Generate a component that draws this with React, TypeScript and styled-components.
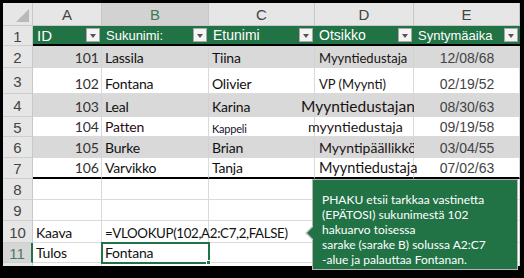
import React from "react";
import styled, { createGlobalStyle, css } from "styled-components";

const GREEN = "#217346";
const LATO = `Lato, "Liberation Sans", Arial, sans-serif`;
const SANS = `"Liberation Sans", Arial, sans-serif`;
const COLS = "30px 69px 107px 106px 99px 106px";

type Tone = "band" | "plain";
type Align = "left" | "right" | "center";

const GlobalStyle = createGlobalStyle`
  html, body { margin: 0; padding: 0; background: #000; }
  body { font-family: ${SANS}; }
`;

const Frame = styled.div`
  width: 524px;
  height: 278px;
  box-sizing: border-box;
  padding: 3px 4px 12px 3px;
  background: #000;
`;

const Sheet = styled.div`
  position: relative;
  width: 517px;
  height: 263px;
`;

const Grid = styled.div`
  width: 517px;
  height: 263px;
  overflow: hidden;
  background: #fff;
`;

const Row = styled.div<{ $h: number }>`
  display: grid;
  grid-template-columns: ${COLS};
  height: ${(p) => p.$h}px;
`;

const Corner = styled.div`
  display: flex;
  align-items: flex-end;
  justify-content: flex-end;
  box-sizing: border-box;
  padding: 0 3px 3px 0;
  background: #e6e6e6;
  border-right: 1px solid #c8c8c8;
  border-bottom: 1px solid #c8c8c8;
  &::after {
    content: "";
    border-left: 13px solid transparent;
    border-bottom: 13px solid #b9b9b9;
  }
`;

const ColHead = styled.div<{ $selected?: boolean }>`
  display: flex;
  align-items: center;
  justify-content: center;
  box-sizing: border-box;
  font-family: ${SANS};
  font-size: 15px;
  color: ${(p) => (p.$selected ? "#3f7a52" : "#444")};
  background: ${(p) => (p.$selected ? "#d2d2d2" : "#e6e6e6")};
  border-right: 1px solid #c8c8c8;
  border-bottom: 1px solid #c8c8c8;
`;

const RowHead = styled.div<{ $selected?: boolean }>`
  display: flex;
  align-items: center;
  justify-content: center;
  box-sizing: border-box;
  padding-top: 1px;
  font-family: ${SANS};
  font-size: 15px;
  color: ${(p) => (p.$selected ? "#4d7a5c" : "#444")};
  background: ${(p) => (p.$selected ? "#d6d6d6" : "#e6e6e6")};
  border-right: ${(p) => (p.$selected ? `2px solid ${GREEN}` : "1px solid #c8c8c8")};
  border-bottom: 1px solid #cfcfcf;
`;

const TableHead = styled.div<{ $size: number }>`
  display: flex;
  align-items: center;
  justify-content: space-between;
  box-sizing: border-box;
  padding: 0 2px 0 4px;
  font-family: ${SANS};
  font-size: ${(p) => p.$size}px;
  color: #fff;
  background: ${GREEN};
  border-bottom: 2px solid #000;
  white-space: nowrap;
`;

const FilterButton = styled.span`
  display: flex;
  align-items: center;
  justify-content: center;
  width: 14px;
  height: 14px;
  box-sizing: border-box;
  background: #f4f4f4;
  border: 1px solid #a8a8a8;
  &::after {
    content: "";
    border-left: 3px solid transparent;
    border-right: 3px solid transparent;
    border-top: 4px solid #555;
    margin-top: 1px;
  }
`;

const Cell = styled.div<{ $tone?: Tone; $align?: Align; $rule?: boolean; $active?: boolean }>`
  position: relative;
  display: flex;
  align-items: flex-end;
  justify-content: ${(p) =>
    p.$align === "right" ? "flex-end" : p.$align === "center" ? "center" : "flex-start"};
  box-sizing: border-box;
  padding: 0 2px 1px 3px;
  white-space: nowrap;
  font-family: ${LATO};
  font-size: 14px;
  color: #111;
  background: ${(p) => (p.$tone === "band" ? "#d9d9d9" : "transparent")};
  border-right: 1px solid ${(p) => (p.$tone === "band" ? "#d2d2d2" : "#dadada")};
  border-bottom: ${(p) =>
    p.$rule ? "2px solid #000" : `1px solid ${p.$tone === "band" ? "#d9d9d9" : "#dadada"}`};
  ${(p) =>
    p.$active &&
    css`
      z-index: 2;
      outline: 2px solid ${GREEN};
      outline-offset: -1px;
      &::after {
        content: "";
        position: absolute;
        right: -3px;
        bottom: -3px;
        width: 5px;
        height: 5px;
        background: ${GREEN};
        border: 1px solid #fff;
        box-sizing: border-box;
      }
    `}
`;

const Text = styled.span<{
  $size?: number;
  $color?: string;
  $sans?: boolean;
  $shift?: number;
  $track?: number;
}>`
  font-family: ${(p) => (p.$sans ? SANS : LATO)};
  font-size: ${(p) => p.$size ?? 14}px;
  letter-spacing: ${(p) => p.$track ?? -0.2}px;
  color: ${(p) => p.$color ?? "#111"};
  margin-left: ${(p) => p.$shift ?? 0}px;
`;

const Callout = styled.div`
  position: absolute;
  left: 309px;
  top: 176px;
  width: 206px;
  height: 91px;
  box-sizing: border-box;
  padding: 12px 6px 0 9px;
  background: ${GREEN};
  border: 1px solid #b5b5b5;
  font-family: ${LATO};
  font-size: 12px;
  line-height: 15px;
  color: #fff;
  z-index: 3;
  &::before {
    content: "";
    position: absolute;
    left: -8px;
    top: 45px;
    border-top: 8px solid transparent;
    border-bottom: 8px solid transparent;
    border-right: 8px solid #c8c8c8;
  }
  &::after {
    content: "";
    position: absolute;
    left: -6px;
    top: 46px;
    border-top: 7px solid transparent;
    border-bottom: 7px solid transparent;
    border-right: 7px solid ${GREEN};
  }
`;

const CalloutLine = styled.div``;

const columns = ["A", "B", "C", "D", "E"];

const heads = [
  { label: "ID", size: 15 },
  { label: "Sukunimi:", size: 13 },
  { label: "Etunimi", size: 14 },
  { label: "Otsikko", size: 14 },
  { label: "Syntymäaika", size: 13 },
];

type Person = {
  h: number;
  id: string;
  last: string;
  lastColor?: string;
  first: string;
  firstSize?: number;
  firstColor?: string;
  title: string;
  titleSize: number;
  titleShift: number;
  date: string;
};

const people: Person[] = [
  { h: 22, id: "101", last: "Lassila", first: "Tiina", title: "Myyntiedustaja", titleSize: 13, titleShift: 1, date: "12/08/68" },
  { h: 26, id: "102", last: "Fontana", first: "Olivier", title: "VP (Myynti)", titleSize: 13, titleShift: 1, date: "02/19/52" },
  { h: 23, id: "103", last: "Leal", first: "Karina", title: "Myyntiedustajan", titleSize: 15.5, titleShift: -17, date: "08/30/63" },
  { h: 20, id: "104", last: "Patten", lastColor: "#2a0a14", first: "Kappeli", firstSize: 11, firstColor: "#1a1030", title: "myyntiedustaja", titleSize: 14.2, titleShift: -10, date: "09/19/58" },
  { h: 21, id: "105", last: "Burke", first: "Brian", title: "Myyntipäällikkö", titleSize: 14, titleShift: 1, date: "03/04/55" },
  { h: 21, id: "106", last: "Varvikko", first: "Tanja", title: "Myyntiedustaja", titleSize: 14.5, titleShift: 1, date: "07/02/63" },
];

const calloutText = [
  "PHAKU etsii tarkkaa vastinetta",
  "(EPÄTOSI) sukunimestä 102",
  "hakuarvo toisessa",
  "sarake (sarake B) solussa A2:C7",
  "-alue ja palauttaa Fontanan.",
];

const EmptyRow = ({ n, h }: { n: number; h: number }) => (
  <Row $h={h}>
    <RowHead>{n}</RowHead>
    <Cell />
    <Cell />
    <Cell />
    <Cell />
    <Cell />
  </Row>
);

const App = () => {
  return (
    <Frame>
      <GlobalStyle />
      <Sheet>
        <Grid>
          <Row $h={23}>
            <Corner />
            {columns.map((c) => (
              <ColHead key={c} $selected={c === "B"}>
                {c}
              </ColHead>
            ))}
          </Row>
          <Row $h={20}>
            <RowHead>1</RowHead>
            {heads.map((h) => (
              <TableHead key={h.label} $size={h.size}>
                <span>{h.label}</span>
                <FilterButton />
              </TableHead>
            ))}
          </Row>
          {people.map((p, i) => {
            const tone: Tone = i % 2 === 0 ? "band" : "plain";
            const rule = i === people.length - 1;
            return (
              <Row key={p.id} $h={p.h}>
                <RowHead>{i + 2}</RowHead>
                <Cell $tone={tone} $align="right" $rule={rule}>
                  <Text $size={14} $track={0} $color="#333">{p.id}</Text>
                </Cell>
                <Cell $tone={tone} $rule={rule}>
                  <Text $color={p.lastColor}>{p.last}</Text>
                </Cell>
                <Cell $tone={tone} $rule={rule}>
                  <Text $size={p.firstSize} $color={p.firstColor}>{p.first}</Text>
                </Cell>
                <Cell $tone={tone} $rule={rule}>
                  <Text $size={p.titleSize} $track={0} $color="#1a1414" $shift={p.titleShift}>
                    {p.title}
                  </Text>
                </Cell>
                <Cell $tone={tone} $align="center" $rule={rule}>
                  <Text $sans $size={14} $track={0} $color="#444">{p.date}</Text>
                </Cell>
              </Row>
            );
          })}
          <EmptyRow n={8} h={21} />
          <EmptyRow n={9} h={21} />
          <Row $h={22}>
            <RowHead>10</RowHead>
            <Cell>
              <Text>Kaava</Text>
            </Cell>
            <Cell>
              <Text $size={13.3} $track={-0.35}>=VLOOKUP(102,A2:C7,2,FALSE)</Text>
            </Cell>
            <Cell />
            <Cell />
            <Cell />
          </Row>
          <Row $h={20}>
            <RowHead $selected>11</RowHead>
            <Cell>
              <Text>Tulos</Text>
            </Cell>
            <Cell $active>
              <Text>Fontana</Text>
            </Cell>
            <Cell />
            <Cell />
            <Cell />
          </Row>
          <EmptyRow n={12} h={20} />
        </Grid>
        <Callout>
          {calloutText.map((line) => (
            <CalloutLine key={line}>{line}</CalloutLine>
          ))}
        </Callout>
      </Sheet>
    </Frame>
  );
};

export default App;
